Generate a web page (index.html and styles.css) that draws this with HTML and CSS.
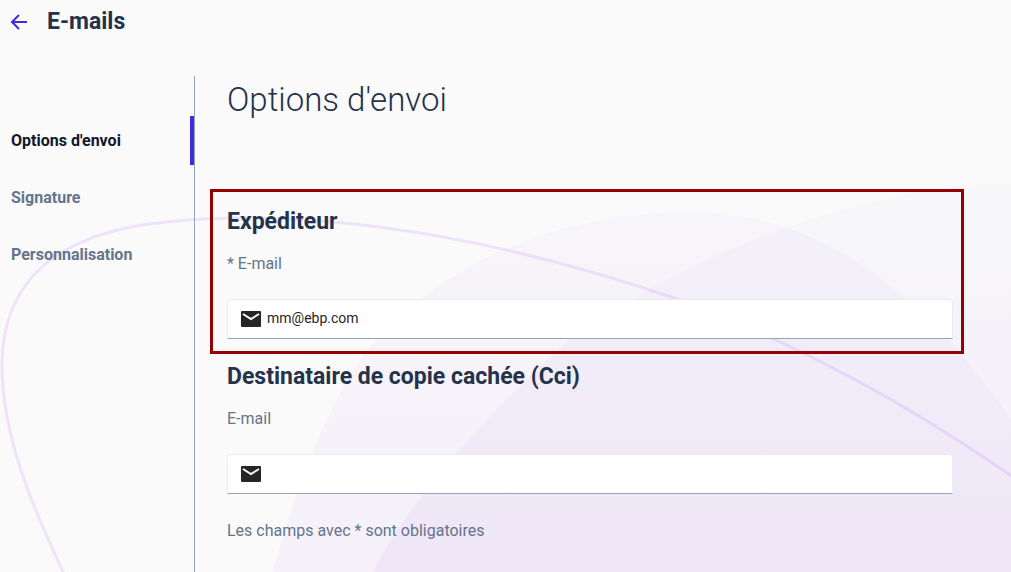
FILE: index.html
```html
<!DOCTYPE html>
<html lang="fr">
<head>
    <meta charset="UTF-8">
    <meta name="viewport" content="width=device-width, initial-scale=1.0">
    <title>E-mails</title>
    <link rel="stylesheet" href="styles.css">
</head>
<body>
    <svg class="background" viewBox="0 0 1011 572" preserveAspectRatio="xMidYMin slice" aria-hidden="true">
        <defs>
            <linearGradient id="blobLeft" gradientUnits="userSpaceOnUse" x1="0" y1="212" x2="0" y2="572">
                <stop offset="0" stop-color="#8050d0" stop-opacity="0.03"/>
                <stop offset="1" stop-color="#a040f0" stop-opacity="0.05"/>
            </linearGradient>
            <linearGradient id="blobRight" gradientUnits="userSpaceOnUse" x1="0" y1="180" x2="0" y2="572">
                <stop offset="0" stop-color="#8060e0" stop-opacity="0.02"/>
                <stop offset="0.4" stop-color="#8050e0" stop-opacity="0.04"/>
                <stop offset="1" stop-color="#8040d8" stop-opacity="0.06"/>
            </linearGradient>
        </defs>
        <path fill="url(#blobLeft)" d="M273 572C292 500 325 405 370 347C450 255 570 212 690 212C800 212 880 268 947 339C972 367 993 393 1011 420V572Z"/>
        <path fill="url(#blobRight)" d="M373 572C408 500 490 410 570 339C690 255 850 189 1011 182V572Z"/>
        <path class="background-line" d="M64 574C33 508 2 436 2 366C2 275 65 232 165 222C330 206 510 242 677 299C795 342 905 402 1013 477"/>
    </svg>

    <header class="topbar">
        <a class="back" href="#" aria-label="Retour">
            <svg width="18" height="18" viewBox="0 0 18 18" aria-hidden="true">
                <path d="M17 9H2M9 2L2 9L9 16"/>
            </svg>
        </a>
        <h1>E-mails</h1>
    </header>

    <div class="layout">
        <nav class="sidebar">
            <a class="active" href="#" aria-current="page">Options d'envoi</a>
            <a href="#">Signature</a>
            <a href="#">Personnalisation</a>
        </nav>

        <main>
            <h2>Options d'envoi</h2>
            <form>
                <section class="group highlighted">
                    <h3>Expéditeur</h3>
                    <label for="sender">* E-mail</label>
                    <div class="field">
                        <svg width="20" height="16" viewBox="0 0 20 16" aria-hidden="true">
                            <rect width="20" height="16" rx="1"/>
                            <path d="M2 3L10 8L18 3"/>
                        </svg>
                        <input type="email" id="sender" value="mm@ebp.com" required>
                    </div>
                </section>
                <section class="group">
                    <h3>Destinataire de copie cachée (Cci)</h3>
                    <label for="bcc">E-mail</label>
                    <div class="field">
                        <svg width="20" height="16" viewBox="0 0 20 16" aria-hidden="true">
                            <rect width="20" height="16" rx="1"/>
                            <path d="M2 3L10 8L18 3"/>
                        </svg>
                        <input type="email" id="bcc">
                    </div>
                </section>
                <p class="hint">Les champs avec * sont obligatoires</p>
            </form>
        </main>
    </div>
</body>
</html>
```

FILE: styles.css
```css
* {
    box-sizing: border-box;
}

body {
    display: flex;
    flex-direction: column;
    min-height: 100vh;
    margin: 0;
    position: relative;
    font-family: Roboto, "Liberation Sans", sans-serif;
    font-size: 16px;
    color: #25324b;
    background: #fafafa;
}

h1, h2, h3, p {
    margin: 0;
}

.background {
    position: absolute;
    top: 0;
    left: 0;
    width: 100%;
    height: 100%;
    z-index: -1;
}

.background-line {
    fill: none;
    stroke: #a050ff;
    stroke-opacity: 0.13;
    stroke-width: 3;
}

.topbar {
    display: flex;
    align-items: center;
    gap: 19px;
    height: 44px;
    padding: 0 10px;
}

.topbar h1 {
    font-size: 23px;
    line-height: 28px;
    font-weight: 700;
}

.back {
    display: flex;
}

.back svg {
    fill: none;
    stroke: #3d2ddb;
    stroke-width: 2;
}

.layout {
    display: flex;
    flex: 1;
    margin-top: 32px;
}

.sidebar {
    display: flex;
    flex-direction: column;
    gap: 8px;
    flex: 0 0 195px;
    padding-top: 40px;
    border-right: 1px solid #94a3b8;
}

.sidebar a {
    padding: 0 11px;
    line-height: 49px;
    font-weight: 700;
    color: #64748b;
    text-decoration: none;
}

.sidebar a.active {
    color: #0f172a;
    border-right: 4px solid #3d2ddb;
}

main {
    flex: 1;
    padding: 0 47px 28px 15px;
}

main h2 {
    padding: 2px 17px 0;
    font-size: 33px;
    line-height: 44px;
    font-weight: 300;
}

form {
    margin-top: 67px;
}

.group {
    padding: 7px 11px 12px 17px;
}

.highlighted {
    padding: 14px 8px 12px 14px;
    border: 3px solid #960000;
}

.group h3 {
    font-size: 23px;
    line-height: 32px;
    font-weight: 700;
}

.group label {
    display: block;
    margin: 14px 0 23px;
    line-height: 24px;
    color: #64748b;
}

.field {
    display: flex;
    align-items: center;
    gap: 6px;
    height: 40px;
    padding-left: 13px;
    background: #fff;
    border: 1px solid #ececf0;
    border-bottom-color: #94a3b8;
    border-radius: 4px 4px 0 0;
}

.field rect {
    fill: #262626;
}

.field path {
    fill: none;
    stroke: #fff;
    stroke-width: 2;
}

.field input {
    flex: 1;
    height: 100%;
    padding: 0 8px 2px 0;
    border: none;
    outline: none;
    background: transparent;
    font: inherit;
    font-size: 14px;
    color: #262626;
}

.hint {
    padding: 13px 17px 0;
    line-height: 24px;
    color: #64748b;
}
```
